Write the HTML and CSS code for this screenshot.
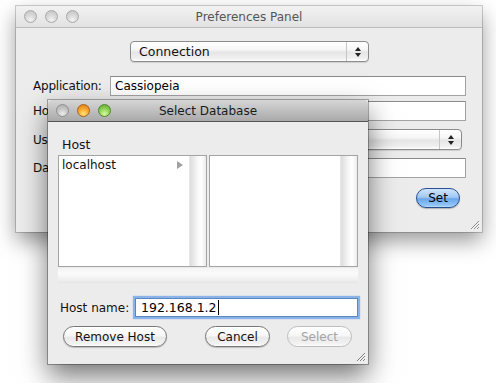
FILE: index.html
```html
<!DOCTYPE html>
<html lang="en">
<head>
    <meta charset="UTF-8">
    <title>Preferences Panel</title>
    <link rel="stylesheet" href="styles.css">
</head>
<body>

    <div class="desktop">

        <!-- background window -->
        <div class="window prefs">
            <div class="titlebar">
                <div class="lights">
                    <span class="light"></span>
                    <span class="light"></span>
                    <span class="light"></span>
                </div>
                <div class="title">Preferences Panel</div>
                <div></div>
            </div>

            <div class="prefs-body">
                <div class="popup-row">
                    <div class="popup connection">
                        <span class="popup-text">Connection</span>
                        <span class="popup-arrows">
                            <svg width="8" height="12" viewBox="0 0 8 12"><path d="M4 1 L7 5 H1 Z M4 11 L7 7 H1 Z" fill="#222"/></svg>
                        </span>
                    </div>
                </div>

                <div class="form-grid">
                    <label>Application:</label>
                    <div class="field">Cassiopeia</div>

                    <label>Host:</label>
                    <div class="field"></div>

                    <label>User:</label>
                    <div class="popup user">
                        <span class="popup-text"></span>
                        <span class="popup-arrows">
                            <svg width="8" height="12" viewBox="0 0 8 12"><path d="M4 1 L7 5 H1 Z M4 11 L7 7 H1 Z" fill="#222"/></svg>
                        </span>
                    </div>

                    <label>Database:</label>
                    <div class="field"></div>
                </div>

                <div class="prefs-actions">
                    <button class="aqua-default">Set</button>
                </div>
            </div>

            <svg class="grip" width="11" height="11" viewBox="0 0 11 11">
                <path d="M10 2 L2 10 M10 5 L5 10 M10 8 L8 10" stroke="#8a8a8a" stroke-width="1"/>
                <path d="M10.5 3 L3 10.5 M10.5 6 L6 10.5 M10.5 9 L9 10.5" stroke="#fff" stroke-width="0.8"/>
            </svg>
        </div>

        <!-- front window -->
        <div class="window select-db">
            <div class="titlebar active">
                <div class="lights">
                    <span class="light"></span>
                    <span class="light orange"></span>
                    <span class="light green"></span>
                </div>
                <div class="title">Select Database</div>
                <div></div>
            </div>

            <div class="db-body">
                <div class="browser-title">Host</div>

                <div class="browser">
                    <div class="column">
                        <div class="column-list">
                            <div class="column-item">
                                <span>localhost</span>
                                <svg width="6" height="8" viewBox="0 0 6 8"><path d="M0 0 L6 4 L0 8 Z" fill="#a0a0a0"/></svg>
                            </div>
                        </div>
                        <div class="vscroll"></div>
                    </div>
                    <div class="column">
                        <div class="column-list"></div>
                        <div class="vscroll"></div>
                    </div>
                </div>
                <div class="hscroll"></div>

                <div class="host-row">
                    <label>Host name:</label>
                    <div class="field focused">192.168.1.2<span class="caret"></span></div>
                </div>

                <div class="button-row">
                    <button class="push">Remove Host</button>
                    <button class="push cancel">Cancel</button>
                    <button class="push" disabled>Select</button>
                </div>
            </div>

            <svg class="grip" width="11" height="11" viewBox="0 0 11 11">
                <path d="M10 2 L2 10 M10 5 L5 10 M10 8 L8 10" stroke="#7a7a7a" stroke-width="1"/>
                <path d="M10.5 3 L3 10.5 M10.5 6 L6 10.5 M10.5 9 L9 10.5" stroke="#fff" stroke-width="0.8"/>
            </svg>
        </div>

    </div>

</body>
</html>
```

FILE: styles.css
```css
body {
    margin: 0;
    padding: 0;
    background-color: #ffffff;
    font-family: 'DejaVu Sans', Verdana, sans-serif;
    font-size: 12px;
    color: #111;
}

.desktop {
    position: relative;
    width: 496px;
    height: 383px;
    overflow: hidden;
}

/* windows sit on the desktop at their own spots */
.window {
    position: absolute;
    background-color: #ececec;
    box-sizing: border-box;
    display: flex;
    flex-direction: column;
}

.prefs {
    left: 16px;
    top: 6px;
    width: 466px;
    height: 226px;
    box-shadow: 0 0 0 1px rgba(0,0,0,0.18), 0 9px 20px rgba(0,0,0,0.4);
}

.select-db {
    left: 48px;
    top: 100px;
    width: 320px;
    height: 264px;
    box-shadow: 0 0 0 1px rgba(0,0,0,0.3), 0 12px 26px rgba(0,0,0,0.55);
}

/* title bars */
.titlebar {
    height: 22px;
    box-sizing: border-box;
    display: grid;
    grid-template-columns: 1fr auto 1fr;
    align-items: center;
    background: linear-gradient(#f2f2f2, #e2e2e2);
    border-bottom: 1px solid #bcbcbc;
    color: #555;
    font-size: 12px;
    border-radius: 4px 4px 0 0;
}

.titlebar.active {
    background: linear-gradient(#d6d6d6, #a9a9a9);
    border-bottom: 1px solid #555;
    color: #1a1a1a;
}

.title {
    text-align: center;
    line-height: 20px;
}

.lights {
    display: flex;
    gap: 8px;
    padding-left: 8px;
}

.light {
    width: 13px;
    height: 13px;
    border-radius: 50%;
    box-sizing: border-box;
    border: 1px solid #a9a9a9;
    background: radial-gradient(circle at 50% 80%, #f4f4f4 0%, #d9d9d9 45%, #c2c2c2 100%);
}

.titlebar.active .light {
    border-color: #8f8f8f;
    background: radial-gradient(circle at 50% 80%, #ececec 0%, #c9c9c9 45%, #a9a9a9 100%);
}

.titlebar.active .light.orange {
    border-color: #a8631a;
    background: radial-gradient(circle at 50% 80%, #ffe27a 0%, #f8a62a 50%, #d8761a 100%);
}

.titlebar.active .light.green {
    border-color: #4d8a2e;
    background: radial-gradient(circle at 50% 80%, #dcf7a6 0%, #8ed253 50%, #5ea234 100%);
}

/* preferences content */
.prefs-body {
    flex: 1;
    padding: 13px 16px 0 17px;
}

.popup-row {
    display: flex;
    justify-content: center;
}

.popup {
    height: 21px;
    box-sizing: border-box;
    border: 1px solid #8b8b8b;
    border-radius: 4px;
    background: linear-gradient(#ffffff, #f6f6f6 40%, #e6e6e6 55%, #efefef 85%, #ffffff);
    display: flex;
    align-items: center;
    box-shadow: 0 1px 1px rgba(0,0,0,0.12);
}

.popup.connection {
    width: 239px;
}

.popup-text {
    flex: 1;
    padding-left: 8px;
    font-size: 12.5px;
    color: #111;
}

.popup-arrows {
    width: 21px;
    height: 100%;
    border-left: 1px solid #c6c6c6;
    display: flex;
    align-items: center;
    justify-content: center;
}

.form-grid {
    margin-top: 14px;
    display: grid;
    grid-template-columns: 77px 1fr;
    row-gap: 5px;
    align-items: center;
}

.form-grid label {
    line-height: 20px;
    letter-spacing: -0.2px;
}

.field {
    height: 20px;
    box-sizing: border-box;
    background: #fff;
    border: 1px solid #a3a3a3;
    border-top-color: #8a8a8a;
    padding-left: 4px;
    line-height: 18px;
    color: #000;
}

.popup.user {
    margin: 3px 4px 3px 0;
}

.prefs-actions {
    display: flex;
    justify-content: flex-end;
    padding-right: 6px;
    margin-top: 10px;
}

.aqua-default {
    width: 44px;
    height: 20px;
    border-radius: 10px;
    border: 1px solid #2a4f8f;
    background: linear-gradient(#cfe4fb, #a2c9f4 45%, #6aa7ea 55%, #8fc5f7 90%, #b8dcfb);
    font-family: inherit;
    font-size: 12px;
    color: #000;
    padding: 0;
    box-shadow: 0 1px 1px rgba(0,0,0,0.25);
}

.grip {
    position: absolute;
    right: 2px;
    bottom: 2px;
}

/* select database content */
.db-body {
    flex: 1;
    padding: 15px 10px 0 10px;
}

.browser-title {
    padding-left: 4px;
    line-height: 15px;
    margin-bottom: 3px;
    font-size: 12.5px;
}

.browser {
    display: grid;
    grid-template-columns: 1fr 1fr;
    gap: 2px;
    height: 112px;
}

.column {
    border: 1px solid #a4a4a4;
    background: #fff;
    display: flex;
}

.column-list {
    flex: 1;
}

.column-item {
    display: flex;
    align-items: center;
    justify-content: space-between;
    padding: 1px 6px 0 3px;
    line-height: 16px;
}

.vscroll {
    width: 16px;
    background: linear-gradient(to right, #dcdcdc, #f6f6f6 45%, #ffffff 70%, #ebebeb);
    border-left: 1px solid #e6e6e6;
}

.hscroll {
    height: 15px;
    margin-top: 1px;
    background: linear-gradient(#f4f4f4, #fbfbfb 40%, #ededed 85%, #e3e3e3);
}

.host-row {
    margin-top: 15px;
    display: flex;
    align-items: center;
    padding-left: 2px;
}

.host-row label {
    width: 75px;
}

.field.focused {
    flex: 1;
    height: 19px;
    border-color: #5b86c4;
    box-shadow: 0 0 1px 2px rgba(107,160,232,0.75);
    padding-left: 5px;
    display: flex;
    align-items: center;
    font-size: 12.5px;
}

.caret {
    display: inline-block;
    width: 1px;
    height: 15px;
    background: #000;
    margin-left: 1px;
}

.button-row {
    margin-top: 9px;
    display: flex;
    padding-left: 5px;
    padding-right: 6px;
    gap: 17px;
}

.push {
    height: 21px;
    width: 65px;
    border-radius: 11px;
    border: 1px solid #777;
    background: linear-gradient(#ffffff, #f7f7f7 45%, #e9e9e9 55%, #f3f3f3 90%, #ffffff);
    font-family: inherit;
    font-size: 12px;
    color: #111;
    padding: 0;
    box-shadow: 0 1px 1px rgba(0,0,0,0.2);
}

.push:first-child {
    width: 104px;
}

.push.cancel {
    margin-left: auto;
}

.push:disabled {
    border-color: #bdbdbd;
    color: #a5a5a5;
    box-shadow: none;
}
```
